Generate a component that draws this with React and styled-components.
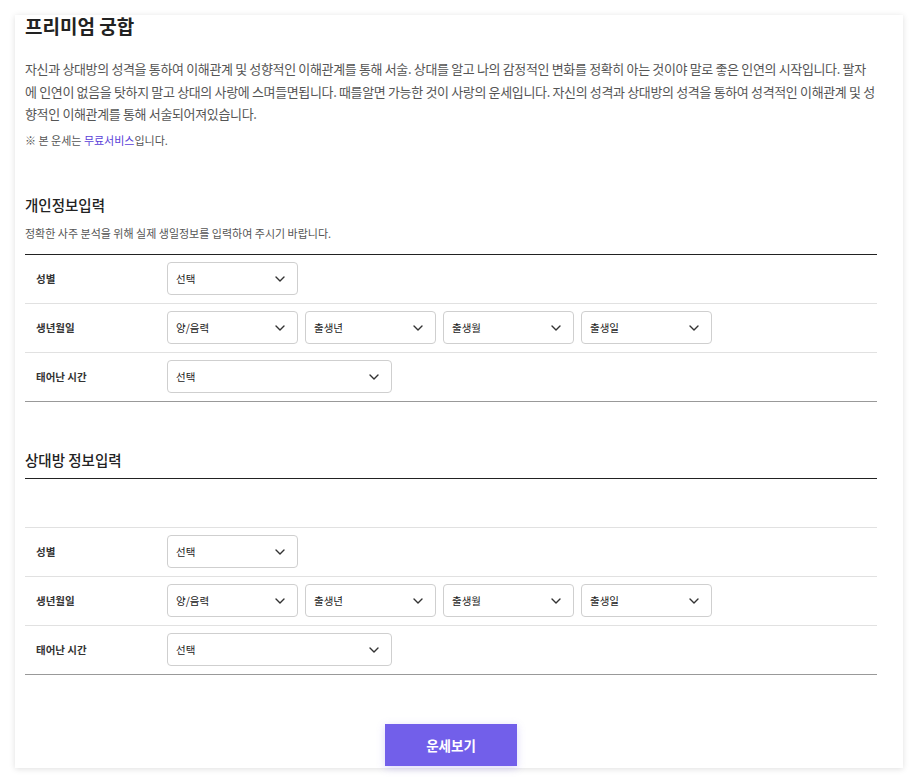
import React from 'react';
import styled, { createGlobalStyle } from 'styled-components';

const GlobalStyle = createGlobalStyle`
    html, body {
        margin: 0;
        padding: 0;
        background: #ffffff;
        font-family: "Noto Sans CJK KR", "Noto Sans", sans-serif;
    }
`

const Page = styled.div`
    padding: 15px 15px 15px 15px;
    width: 888px;
`

const Card = styled.div`
    background: #fff;
    box-shadow: 0 1px 6px rgba(0, 0, 0, 0.13);
    padding: 0 26px 2px 10px;
    display: flex;
    flex-direction: column;
`

const Title = styled.h1`
    margin: 0;
    font-size: 19px;
    line-height: 22px;
    font-weight: 700;
    color: #222;
`

// 원본 줄바꿈 위치를 그대로 유지
const Desc = styled.p`
    margin: 21px 0 0;
    font-size: 13px;
    line-height: 22.5px;
    color: #555;
    letter-spacing: -0.35px;
    white-space: nowrap;
`

const Notice = styled.p`
    margin: 6px 0 0;
    font-size: 11px;
    line-height: 16px;
    color: #555;

    a {
        color: #5a3fd8;
        text-decoration: none;
    }
`

const SectionTitle = styled.h2`
    margin: ${p => p.$top}px 0 0;
    font-size: 14.5px;
    line-height: 20px;
    font-weight: 500;
    color: #222;
`

const SubText = styled.p`
    margin: 11px 0 0;
    font-size: 11px;
    line-height: 14px;
    color: #555;
`

const Table = styled.div`
    margin-top: ${p => p.$top}px;
    border-top: 1px solid #222;
    border-bottom: 1px solid #999;
    padding-top: ${p => p.$gap}px;
`

const Row = styled.div`
    display: flex;
    align-items: center;
    height: 48px;
    border-top: ${p => p.$first ? 'none' : '1px solid #e1e1e1'};
`

const FirstRowWrap = styled.div`
    border-top: ${p => p.$line ? '1px solid #e1e1e1' : 'none'};
`

const Label = styled.div`
    width: 142px;
    padding-left: 11px;
    box-sizing: border-box;
    font-size: 10.5px;
    font-weight: 700;
    color: #333;
`

const Selects = styled.div`
    display: flex;
    gap: 7px;
`

const SelectBox = styled.div`
    width: ${p => p.$wide ? 225 : 131}px;
    height: 33px;
    box-sizing: border-box;
    border: 1px solid #cfcfcf;
    border-radius: 4px;
    display: flex;
    align-items: center;
    justify-content: space-between;
    padding: 0 12px 0 8px;
    font-size: 10.5px;
    color: #222;
    background: #fff;
`

const ButtonWrap = styled.div`
    display: flex;
    justify-content: center;
    margin-top: 49px;
`

const SubmitButton = styled.button`
    width: 132px;
    height: 42px;
    border: none;
    background: #725fea;
    color: #fff;
    font-family: inherit;
    font-size: 13.5px;
    font-weight: 700;
    box-shadow: 0 2px 8px rgba(114, 95, 234, 0.25);
    cursor: pointer;
`

const Chevron = () => (
    <svg width="10" height="6" viewBox="0 0 10 6" fill="none">
        <path d="M1 1l4 4 4-4" stroke="#333" strokeWidth="1.4" strokeLinecap="round" strokeLinejoin="round" />
    </svg>
)

const Select = ({ text, wide }) => (
    <SelectBox $wide={wide}>
        <span>{text}</span>
        <Chevron />
    </SelectBox>
)

const InfoRows = ({ topLine }) => (
    <>
        <FirstRowWrap $line={topLine}>
            <Row $first>
                <Label>성별</Label>
                <Select text="선택" />
            </Row>
        </FirstRowWrap>
        <Row>
            <Label>생년월일</Label>
            <Selects>
                <Select text="양/음력" />
                <Select text="출생년" />
                <Select text="출생월" />
                <Select text="출생일" />
            </Selects>
        </Row>
        <Row>
            <Label>태어난 시간</Label>
            <Select text="선택" wide />
        </Row>
    </>
)

export default function App() {
    return (
        <Page>
            <GlobalStyle />
            <Card>
                <Title>프리미엄 궁합</Title>
                <Desc>
                    자신과 상대방의 성격을 통하여 이해관계 및 성향적인 이해관계를 통해 서술. 상대를 알고 나의 감정적인 변화를 정확히 아는 것이야 말로 좋은 인연의 시작입니다. 팔자<br />
                    에 인연이 없음을 탓하지 말고 상대의 사랑에 스며들면됩니다. 때를알면 가능한 것이 사랑의 운세입니다. 자신의 성격과 상대방의 성격을 통하여 성격적인 이해관계 및 성<br />
                    향적인 이해관계를 통해 서술되어져있습니다.
                </Desc>
                <Notice>※ 본 운세는 <a href="#">무료서비스</a>입니다.</Notice>

                <SectionTitle $top={47}>개인정보입력</SectionTitle>
                <SubText>정확한 사주 분석을 위해 실제 생일정보를 입력하여 주시기 바랍니다.</SubText>
                <Table $top={14} $gap={0}>
                    <InfoRows />
                </Table>

                <SectionTitle $top={48}>상대방 정보입력</SectionTitle>
                <Table $top={8} $gap={48}>
                    <InfoRows topLine />
                </Table>

                <ButtonWrap>
                    <SubmitButton>운세보기</SubmitButton>
                </ButtonWrap>
            </Card>
        </Page>
    );
}
